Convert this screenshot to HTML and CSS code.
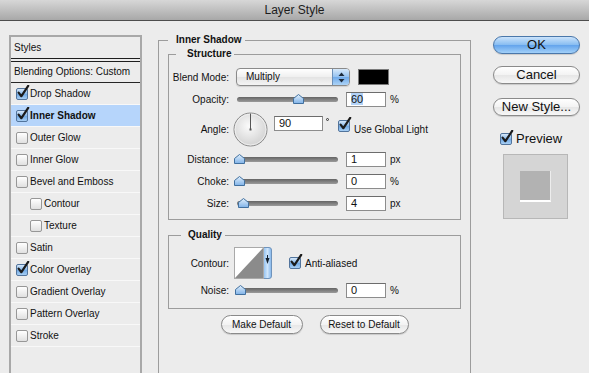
FILE: index.html
```html
<!DOCTYPE html>
<html lang="en">
<head>
  <meta charset="UTF-8">
  <title>Layer Style</title>
  <meta name="viewport" content="width=device-width, initial-scale=1.0">
  <link rel="stylesheet" href="styles.css">
</head>
<body>

<svg class="defs" aria-hidden="true">
  <defs>
    <linearGradient id="thumbGrad" x1="0" y1="0" x2="0" y2="1">
      <stop offset="0" stop-color="#e2f0fc"/>
      <stop offset="1" stop-color="#7fb2e8"/>
    </linearGradient>
  </defs>
  <symbol id="tick" viewBox="0 0 14 14">
    <path d="M2.6 7.6 L5.4 11.2 L12.2 0.8" fill="none" stroke="#1b1b1b" stroke-width="2.2" stroke-linecap="round" stroke-linejoin="round"/>
  </symbol>
  <symbol id="thumb" viewBox="0 0 11 10">
    <polygon points="0.5,4.5 5.5,0.5 10.5,4.5 10.5,9.5 0.5,9.5" fill="url(#thumbGrad)" stroke="#41709f"/>
  </symbol>
</svg>

<div class="titlebar">Layer Style</div>

<div class="dialog">

  <div class="styles-panel">
    <div class="panel-head">Styles</div>
    <div class="panel-blend">Blending Options: Custom</div>
    <div class="style-row"><span class="cb on"><svg><use href="#tick"/></svg></span><span class="style-name">Drop Shadow</span></div>
    <div class="style-row sel"><span class="cb on"><svg><use href="#tick"/></svg></span><span class="style-name">Inner Shadow</span></div>
    <div class="style-row"><span class="cb"></span><span class="style-name">Outer Glow</span></div>
    <div class="style-row"><span class="cb"></span><span class="style-name">Inner Glow</span></div>
    <div class="style-row"><span class="cb"></span><span class="style-name">Bevel and Emboss</span></div>
    <div class="style-row sub"><span class="cb"></span><span class="style-name">Contour</span></div>
    <div class="style-row sub"><span class="cb"></span><span class="style-name">Texture</span></div>
    <div class="style-row"><span class="cb"></span><span class="style-name">Satin</span></div>
    <div class="style-row"><span class="cb on"><svg><use href="#tick"/></svg></span><span class="style-name">Color Overlay</span></div>
    <div class="style-row"><span class="cb"></span><span class="style-name">Gradient Overlay</span></div>
    <div class="style-row"><span class="cb"></span><span class="style-name">Pattern Overlay</span></div>
    <div class="style-row"><span class="cb"></span><span class="style-name">Stroke</span></div>
  </div>

  <fieldset class="group outer">
    <legend>Inner Shadow</legend>

    <fieldset class="group structure">
      <legend>Structure</legend>

      <div class="row">
        <span class="lbl">Blend Mode:</span>
        <div class="popup">
          <span class="popup-text">Multiply</span>
          <span class="popup-arrows">
            <svg width="7" height="11" viewBox="0 0 7 11"><polygon points="3.5,0.5 6.5,4 0.5,4" fill="#1d2a3a"/><polygon points="0.5,7 6.5,7 3.5,10.5" fill="#1d2a3a"/></svg>
          </span>
        </div>
        <span class="color-swatch"></span>
      </div>

      <div class="row">
        <span class="lbl">Opacity:</span>
        <div class="slider"><span class="track"></span><svg class="thumb" style="left:56px"><use href="#thumb"/></svg></div>
        <div class="field"><span class="hl">60</span></div>
        <span class="unit">%</span>
      </div>

      <div class="row row-angle">
        <span class="lbl">Angle:</span>
        <svg class="dial" width="35" height="35" viewBox="0 0 35 35">
          <defs>
            <radialGradient id="dialGrad" cx="0.45" cy="0.4" r="0.6">
              <stop offset="0" stop-color="#fbfbfb"/>
              <stop offset="1" stop-color="#d2d2d2"/>
            </radialGradient>
          </defs>
          <circle cx="17.5" cy="17.5" r="16.5" fill="url(#dialGrad)" stroke="#8a8a8a"/>
          <circle cx="17.5" cy="17.5" r="15.5" fill="none" stroke="#f4f4f4" stroke-width="0.8"/>
          <line x1="17.5" y1="17.5" x2="17.5" y2="1.5" stroke="#555" stroke-width="1"/>
          <rect x="16.5" y="16.5" width="2" height="2" fill="#555"/>
        </svg>
        <div class="field field-wide">90</div>
        <span class="deg"></span>
        <span class="cb on cb-angle"><svg><use href="#tick"/></svg></span>
        <span class="check-text">Use Global Light</span>
      </div>

      <div class="row">
        <span class="lbl">Distance:</span>
        <div class="slider"><span class="track"></span><svg class="thumb" style="left:-3px"><use href="#thumb"/></svg></div>
        <div class="field">1</div>
        <span class="unit">px</span>
      </div>

      <div class="row">
        <span class="lbl">Choke:</span>
        <div class="slider"><span class="track"></span><svg class="thumb" style="left:-3px"><use href="#thumb"/></svg></div>
        <div class="field">0</div>
        <span class="unit">%</span>
      </div>

      <div class="row">
        <span class="lbl">Size:</span>
        <div class="slider"><span class="track"></span><svg class="thumb" style="left:1px"><use href="#thumb"/></svg></div>
        <div class="field">4</div>
        <span class="unit">px</span>
      </div>
    </fieldset>

    <fieldset class="group quality">
      <legend>Quality</legend>

      <div class="row row-contour">
        <span class="lbl">Contour:</span>
        <svg class="contour" width="38" height="32" viewBox="0 0 38 32">
          <defs>
            <linearGradient id="stripGrad" x1="0" y1="0" x2="1" y2="0">
              <stop offset="0" stop-color="#8fc0f1"/>
              <stop offset="0.5" stop-color="#cfe5fa"/>
              <stop offset="1" stop-color="#7fb3ea"/>
            </linearGradient>
          </defs>
          <path d="M29.5 0.5 H35 Q37.5 0.5 37.5 3 V29 Q37.5 31.5 35 31.5 H29.5 Z" fill="url(#stripGrad)" stroke="#6f93bb"/>
          <rect x="0.5" y="0.5" width="29" height="31" fill="#fff" stroke="#a9a9a9"/>
          <polygon points="1,31 29,1 29,31" fill="#8b8b8b"/>
          <polygon points="31.5,11 35.5,11 33.5,17" fill="#14202e"/>
          <rect x="33" y="8" width="1" height="4" fill="#14202e"/>
        </svg>
        <span class="cb on cb-aa"><svg><use href="#tick"/></svg></span>
        <span class="check-text">Anti-aliased</span>
      </div>

      <div class="row">
        <span class="lbl">Noise:</span>
        <div class="slider"><span class="track"></span><svg class="thumb" style="left:-2px"><use href="#thumb"/></svg></div>
        <div class="field">0</div>
        <span class="unit">%</span>
      </div>
    </fieldset>

    <div class="defaults">
      <button class="pill make">Make Default</button>
      <button class="pill reset">Reset to Default</button>
    </div>
  </fieldset>

  <div class="actions">
    <button class="pill big ok">OK</button>
    <button class="pill big cancel">Cancel</button>
    <button class="pill big new-style">New Style...</button>
    <div class="preview-check">
      <span class="cb on"><svg><use href="#tick"/></svg></span>
      <span class="preview-label">Preview</span>
    </div>
    <div class="preview-box"><div class="preview-square"></div></div>
  </div>

</div>

</body>
</html>
```

FILE: styles.css
```css
* {
  box-sizing: border-box;
}

body {
  margin: 0;
  width: 589px;
  height: 373px;
  overflow: hidden;
  background: #ececec;
  font-family: 'Liberation Sans', Arial, sans-serif;
  font-size: 10px;
  color: #111;
}

.defs {
  display: block;
  width: 0;
  height: 0;
}

.titlebar {
  height: 21px;
  line-height: 20px;
  text-align: center;
  font-size: 12px;
  color: #1c1c1c;
  background: linear-gradient(#d7d7d7, #a8a8a8);
  border-bottom: 1px solid #4d4d4d;
}

.dialog {
  display: flex;
  align-items: flex-start;
}

/* left list of styles */
.styles-panel {
  width: 133px;
  height: 360px;
  margin: 14px 0 0 9px;
  border: 2px solid #a8a8a8;
  border-bottom: none;
}

.panel-head {
  height: 25px;
  line-height: 21px;
  padding-left: 3px;
  border-bottom: 4px double #1e1e1e;
}

.panel-blend {
  height: 21px;
  line-height: 20px;
  padding-left: 3px;
  border-bottom: 1px solid #262626;
}

.style-row {
  height: 22px;
  display: flex;
  align-items: center;
  padding-left: 5px;
  border-bottom: 1px solid #f8f8f8;
}

.style-row.sub {
  padding-left: 19px;
}

.style-row.sel {
  background: #b6d5fb;
  font-weight: bold;
}

.style-name {
  margin-left: 2px;
}

/* checkboxes */
.cb {
  position: relative;
  flex: none;
  width: 12px;
  height: 12px;
  border: 1px solid #979797;
  border-radius: 2px;
  background: linear-gradient(#ffffff, #e0e0e0);
}

.cb.on {
  background: linear-gradient(#d6e8fa, #86b7ea 50%, #6ea7e4 51%, #a8cff4);
  border-color: #52749c;
}

.cb svg {
  position: absolute;
  left: -1px;
  top: -4px;
  width: 14px;
  height: 14px;
  overflow: visible;
}

/* group boxes */
fieldset.group {
  margin: 0;
  padding: 0;
  min-width: 0;
  border: 1px solid #9c9c9c;
}

fieldset.group > legend {
  font-weight: bold;
  line-height: 12px;
  padding: 0 3px 0 8px;
}

fieldset.outer {
  flex: none;
  width: 313px;
  height: 350px;
  margin: 13px 0 0 16px;
  padding: 0 9px;
}

fieldset.structure {
  margin-top: 2px;
  padding: 6px 0 5px;
}

fieldset.structure > legend {
  margin-left: 7px;
  padding-left: 11px;
}

fieldset.quality {
  margin-top: 9px;
  padding: 6px 0 7px;
}

fieldset.quality > legend {
  margin-left: 12px;
  padding-left: 7px;
}

.row {
  display: flex;
  align-items: center;
  height: 22px;
}

.row-angle {
  height: 38px;
}

.row-contour {
  height: 32px;
}

.lbl {
  flex: none;
  width: 60px;
  text-align: right;
}

/* popup menu */
.popup {
  display: flex;
  flex: none;
  width: 114px;
  height: 18px;
  margin-left: 7px;
  border: 1px solid #8a8a8a;
  border-radius: 4px;
  overflow: hidden;
  background: linear-gradient(#ffffff, #efefef 50%, #e3e3e3 51%, #f4f4f4);
  box-shadow: 0 1px 1px rgba(0,0,0,0.12);
}

.popup-text {
  flex: 1;
  padding-left: 9px;
  line-height: 16px;
}

.popup-arrows {
  display: flex;
  align-items: center;
  justify-content: center;
  width: 17px;
  border-left: 1px solid #6b8fb8;
  background: linear-gradient(#d7e9fa, #93c1f0 50%, #70aaea 51%, #acd3f6);
}

.color-swatch {
  flex: none;
  width: 31px;
  height: 16px;
  margin-left: 8px;
  background: #000;
  border: 1px solid #7a7a7a;
}

/* sliders */
.slider {
  position: relative;
  display: flex;
  align-items: center;
  flex: none;
  width: 101px;
  height: 10px;
  margin-left: 8px;
}

.track {
  width: 100%;
  height: 5px;
  border-radius: 3px;
  background: linear-gradient(#646464, #9b9b9b);
}

.thumb {
  position: absolute;
  top: 0;
  width: 11px;
  height: 10px;
}

.field {
  flex: none;
  width: 40px;
  height: 15px;
  margin-left: 8px;
  padding-left: 4px;
  font-size: 11px;
  line-height: 13px;
  background: #fff;
  border: 1px solid #8c8c8c;
  border-top-color: #6c6c6c;
}

.hl {
  background: #b3d3f8;
}

.unit {
  margin-left: 4px;
}

.dial {
  flex: none;
  margin-left: 4px;
}

.field-wide {
  width: 49px;
  margin-left: 6px;
  align-self: flex-start;
  margin-top: 6px;
}

/* degree mark drawn as a tiny ring */
.deg {
  flex: none;
  align-self: flex-start;
  width: 3px;
  height: 3px;
  margin: 8px 2px 0 3px;
  border: 1px solid #333;
  border-radius: 50%;
}

.cb-angle {
  align-self: flex-start;
  margin: 10px 0 0 7px;
}

.check-text {
  margin-left: 4px;
}

.contour {
  flex: none;
  margin-left: 5px;
}

.cb-aa {
  margin-left: 17px;
}

/* push buttons */
.pill {
  display: block;
  height: 19px;
  padding: 0;
  font-family: inherit;
  font-size: 10px;
  color: #111;
  border: 1px solid #8a8a8a;
  border-radius: 10px;
  background: linear-gradient(#ffffff, #f3f3f3 50%, #e6e6e6 51%, #f7f7f7);
  box-shadow: 0 1px 1px rgba(0,0,0,0.15);
}

.defaults {
  display: flex;
  justify-content: center;
  gap: 17px;
  margin-top: 6px;
}

.make {
  width: 82px;
}

.reset {
  width: 89px;
}

.actions {
  display: flex;
  flex-direction: column;
  width: 87px;
  margin: 15px 0 0 22px;
}

.big {
  width: 87px;
  height: 18px;
  font-size: 13px;
  line-height: 16px;
  border-radius: 9px;
}

.ok {
  border-color: #4a77aa;
  background: linear-gradient(#cbe3fb, #86bcf1 50%, #62a3ec 51%, #a2d0f8);
}

.cancel {
  margin-top: 12px;
}

.new-style {
  margin-top: 14px;
}

.preview-check {
  display: flex;
  align-items: center;
  margin: 15px 0 0 7px;
  font-size: 13px;
}

.preview-label {
  margin-left: 4px;
}

.preview-box {
  width: 65px;
  height: 65px;
  margin: 8px 0 0 10px;
  padding: 16px;
  background: #d5d5d5;
  border: 1px solid #b7b7b7;
}

.preview-square {
  width: 31px;
  height: 31px;
  background: #b2b2b2;
  border-bottom: 2px solid #fff;
  border-right: 1px solid #ededed;
}
```
